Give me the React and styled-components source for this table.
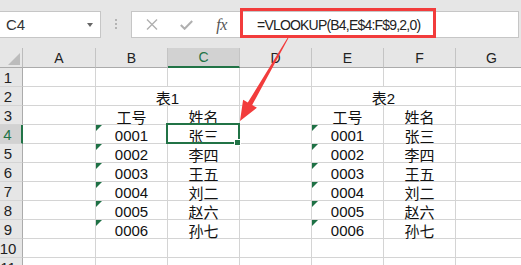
import React from "react";
import styled, { createGlobalStyle, css } from "styled-components";

const GlobalStyle = createGlobalStyle`
  body {
    margin: 0;
    background: #fff;
    font-family: "Liberation Sans", "Noto Sans CJK SC", sans-serif;
  }
`;

const green = "#217346";
const gridLine = "#d4d4d4";

const Page = styled.div`
  position: relative;
  width: 521px;
  height: 265px;
  overflow: hidden;
  background: #fff;
`;

const Toolbar = styled.div`
  display: flex;
  align-items: flex-start;
  height: 48px;
  padding-top: 11px;
  box-sizing: border-box;
  background: #e6e6e6;
`;

const NameBox = styled.div`
  display: flex;
  align-items: center;
  justify-content: space-between;
  width: 101px;
  height: 27px;
  box-sizing: border-box;
  padding: 0 7px 0 6px;
  background: #fff;
  border: 1px solid #c6c6c6;
  border-left: none;
  font-size: 15px;
  color: #333;
`;

const Caret = styled.span`
  width: 0;
  height: 0;
  border-left: 3px solid transparent;
  border-right: 3px solid transparent;
  border-top: 4px solid #666;
`;

const Grip = styled.div`
  display: flex;
  flex-direction: column;
  align-items: center;
  gap: 2px;
  width: 30px;
  padding-top: 8px;

  span {
    width: 2px;
    height: 2px;
    background: #b4b4b4;
  }
`;

const FormulaBox = styled.div`
  display: flex;
  align-items: center;
  width: 388px;
  height: 27px;
  box-sizing: border-box;
  padding-left: 2px;
  background: #fff;
  border: 1px solid #c6c6c6;
`;

const IconButton = styled.div`
  display: flex;
  align-items: center;
  justify-content: center;
  width: 35px;
  height: 100%;
  color: #b0b0b0;
`;

const Fx = styled.span`
  font-family: "Liberation Serif", serif;
  font-style: italic;
  font-size: 16px;
  color: #555;
  letter-spacing: -0.5px;
`;

const FormulaText = styled.div`
  margin-left: 18px;
  font-size: 14px;
  letter-spacing: -0.8px;
  color: #222;
`;

const Highlight = styled.div`
  position: absolute;
  left: 240px;
  top: 8px;
  width: 196px;
  height: 30px;
  box-sizing: border-box;
  border: 3px solid #f23c3c;
`;

const Arrow = styled.svg`
  position: absolute;
  left: 0;
  top: 0;
  pointer-events: none;
`;

const Sheet = styled.div`
  display: grid;
  grid-template-columns: 23px 73px repeat(6, 72px);
  grid-template-rows: 20px repeat(11, 19px);
  font-size: 15px;
  color: #111;
`;

const Corner = styled.div`
  display: flex;
  align-items: flex-end;
  justify-content: flex-end;
  padding: 0 2px 2px 0;
  background: #e6e6e6;
  border-right: 1px solid #bcbcbc;
  border-bottom: 1px solid #ababab;
`;

const CornerMark = styled.span`
  width: 0;
  height: 0;
  border-left: 12px solid transparent;
  border-bottom: 12px solid #bcbcbc;
`;

const ColHead = styled.div`
  display: flex;
  align-items: center;
  justify-content: center;
  background: #e6e6e6;
  border-right: 1px solid #c4c4c4;
  border-bottom: 1px solid #ababab;
  font-size: 14px;
  color: #222;

  ${(p) =>
    p.$active &&
    css`
      background: #d2d2d2;
      color: ${green};
      border-bottom: 2px solid ${green};
    `}
`;

const RowHead = styled.div`
  display: flex;
  align-items: center;
  justify-content: center;
  padding-right: 6px;
  background: #e6e6e6;
  border-right: 1px solid #ababab;
  border-bottom: 1px solid ${gridLine};
  font-size: 15px;
  color: #222;

  ${(p) =>
    p.$active &&
    css`
      background: #d2d2d2;
      color: ${green};
      border-right: 2px solid ${green};
    `}
`;

const Cell = styled.div`
  position: relative;
  display: flex;
  align-items: center;
  justify-content: center;
  padding-top: 2px;
  border-right: 1px solid ${gridLine};
  border-bottom: 1px solid ${gridLine};
  grid-column: span ${(p) => p.$span || 1};

  ${(p) =>
    p.$flag &&
    css`
      &::before {
        content: "";
        position: absolute;
        left: 0;
        top: 0;
        border-top: 6px solid #1e7145;
        border-right: 6px solid transparent;
      }
    `}

  ${(p) =>
    p.$selected &&
    css`
      z-index: 1;
      &::after {
        content: "";
        position: absolute;
        left: -2px;
        top: -2px;
        right: -1px;
        bottom: -1px;
        border: 2px solid ${green};
      }
    `}
`;

const FillHandle = styled.span`
  position: absolute;
  right: -2px;
  bottom: -3px;
  width: 5px;
  height: 5px;
  background: ${green};
  border: 1px solid #fff;
  z-index: 2;
`;

const columns = ["A", "B", "C", "D", "E", "F", "G"];

const ids = ["0001", "0002", "0003", "0004", "0005", "0006"];
const names = ["张三", "李四", "王五", "刘二", "赵六", "孙七"];

function buildRows() {
  const rows = [];
  rows.push([{}, {}, {}, {}, {}, {}, {}]);
  rows.push([{}, { text: "表1", span: 2 }, {}, { text: "表2", span: 2 }, {}]);
  rows.push([{}, { text: "工号" }, { text: "姓名" }, {}, { text: "工号" }, { text: "姓名" }, {}]);
  ids.forEach((id, i) => {
    rows.push([
      {},
      { text: id, flag: true },
      { text: names[i], selected: i === 0 },
      {},
      { text: id, flag: true },
      { text: names[i] },
      {},
    ]);
  });
  rows.push([{}, {}, {}, {}, {}, {}, {}]);
  rows.push([{}, {}, {}, {}, {}, {}, {}]);
  return rows;
}

const rows = buildRows();

function CrossIcon() {
  return (
    <svg width="12" height="11" viewBox="0 0 12 11">
      <path d="M1 0.5 L11 10.5 M11 0.5 L1 10.5" stroke="currentColor" strokeWidth="1.4" fill="none" />
    </svg>
  );
}

function CheckIcon() {
  return (
    <svg width="13" height="10" viewBox="0 0 13 10">
      <path d="M0.8 5 L4.6 8.8 L12.2 1" stroke="currentColor" strokeWidth="2" fill="none" />
    </svg>
  );
}

export default function App() {
  return (
    <Page>
      <GlobalStyle />
      <Toolbar>
        <NameBox>
          C4
          <Caret />
        </NameBox>
        <Grip>
          <span />
          <span />
          <span />
        </Grip>
        <FormulaBox>
          <IconButton>
            <CrossIcon />
          </IconButton>
          <IconButton>
            <CheckIcon />
          </IconButton>
          <IconButton>
            <Fx>fx</Fx>
          </IconButton>
          <FormulaText>=VLOOKUP(B4,E$4:F$9,2,0)</FormulaText>
        </FormulaBox>
      </Toolbar>

      <Sheet>
        <Corner>
          <CornerMark />
        </Corner>
        {columns.map((c) => (
          <ColHead key={c} $active={c === "C"}>
            {c}
          </ColHead>
        ))}
        {rows.map((row, r) => (
          <React.Fragment key={r}>
            <RowHead $active={r === 3}>{r + 1}</RowHead>
            {row.map((cell, i) => (
              <Cell key={i} $span={cell.span} $flag={cell.flag} $selected={cell.selected}>
                {cell.text}
                {cell.selected && <FillHandle />}
              </Cell>
            ))}
          </React.Fragment>
        ))}
      </Sheet>

      <Highlight />
      <Arrow width="521" height="265" viewBox="0 0 521 265">
        <polygon
          points="288.4,38.3 252.2,105 256.9,107.7 240,121 243.1,99.7 247.8,102.5 287.6,37.7"
          fill="#f23c3c"
        />
      </Arrow>
    </Page>
  );
}
